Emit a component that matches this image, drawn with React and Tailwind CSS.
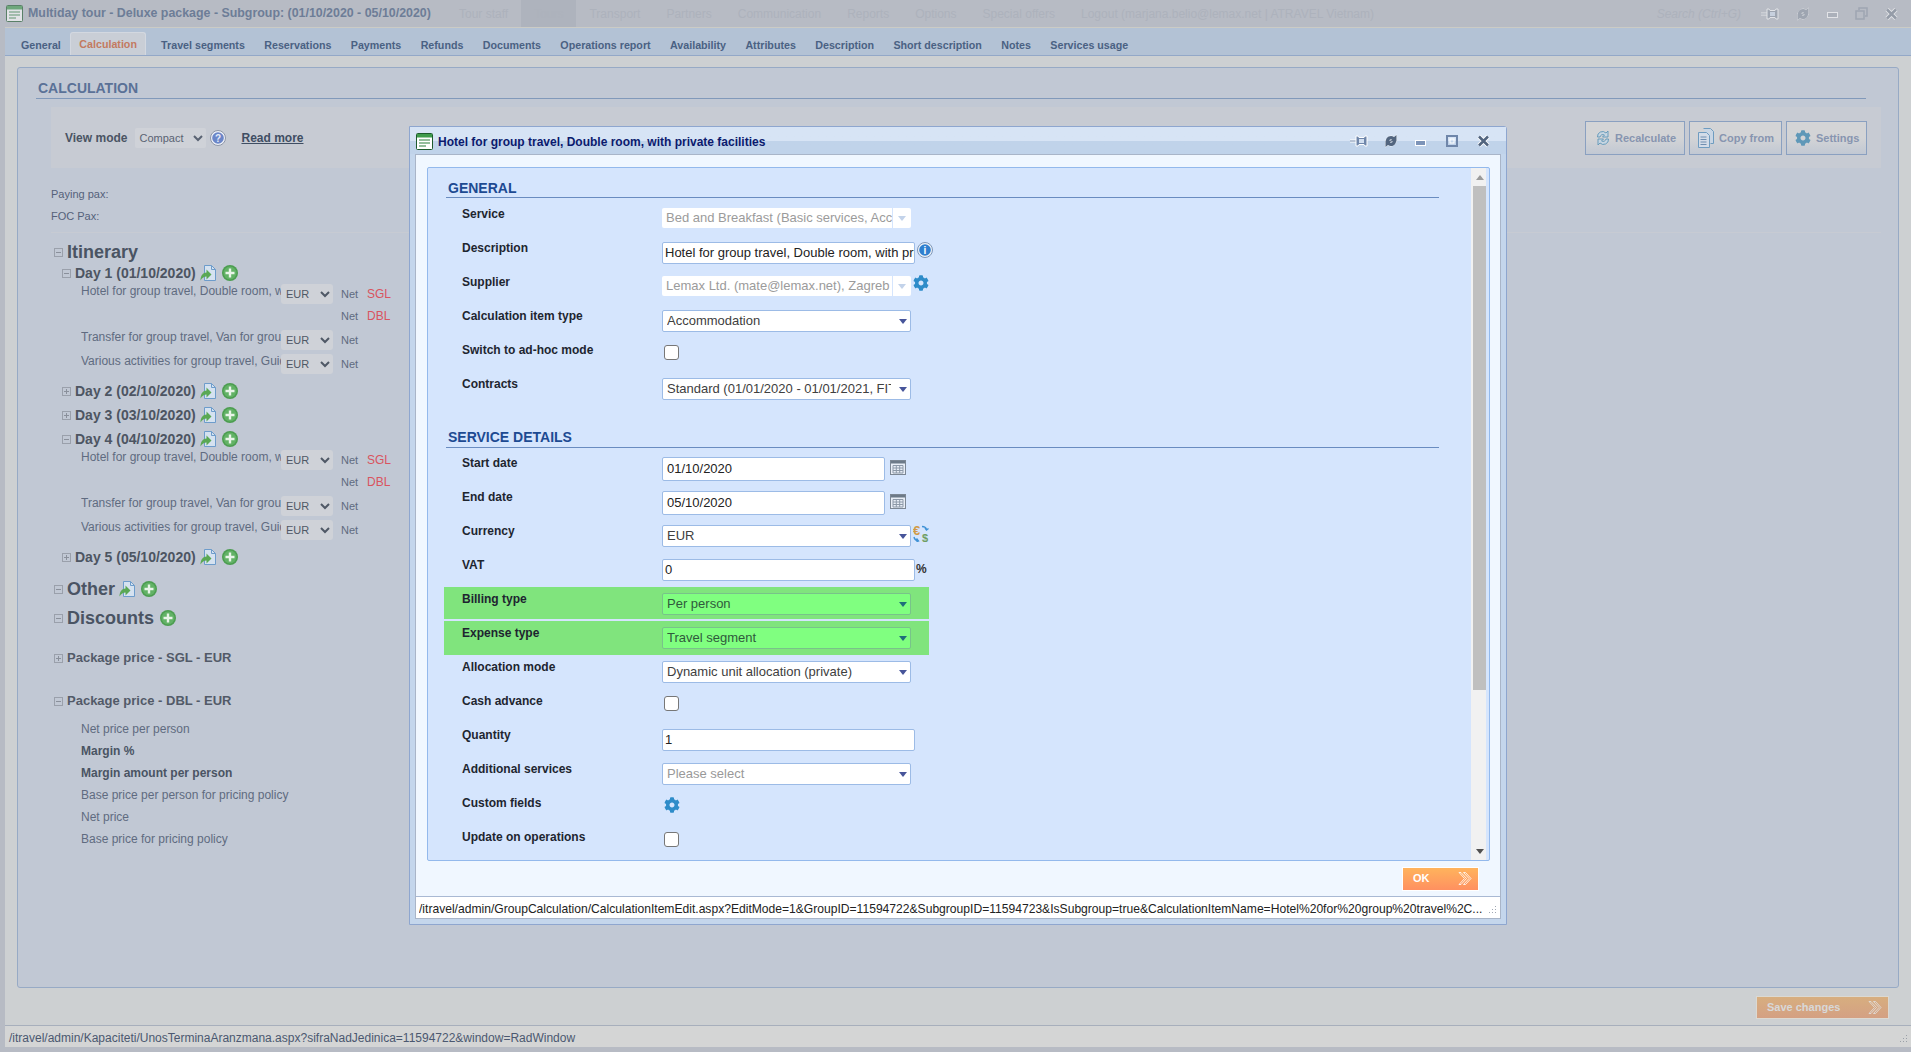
import React from 'react';
import { FaCog } from 'react-icons/fa';

const tabs = ['Reservations', 'Payments', 'Refunds', 'Documents', 'Operations report', 'Availability', 'Attributes', 'Description', 'Short description', 'Notes', 'Services usage'];
const ghostNav = ['Tour staff', 'Tours', 'Transport', 'Partners', 'Communication', 'Reports', 'Options', 'Special offers', 'Logout (marjana.belio@lemax.net | ATRAVEL Vietnam)'];

const WindowIcon = ({ dim }) => (
  <svg width="17" height="17" viewBox="0 0 17 17" className={`shrink-0 ${dim ? 'opacity-60' : ''}`}>
    <rect x="0.5" y="0.5" width="16" height="16" rx="1" fill="#fff" stroke="#1d5a2c" />
    <rect x="1" y="1" width="15" height="3.5" fill="#3f9b4c" />
    <path d="M3 7h11M3 10h11M3 13h7" stroke="#2b7f3d" strokeWidth="1.2" />
  </svg>
);

const DocArrow = () => (
  <svg width="16" height="16" viewBox="0 0 16 16" className="shrink-0">
    <path d="M4.500.5h7l4 4v11h-11z" fill="#d5e2f0" stroke="#6d9ccb" />
    <path d="M11.500.5v4h4" fill="none" stroke="#6d9ccb" />
    <path d="M.5 15.500c0-5 2.500-8 6-8V4.500l5 5-5 5v-3c-2.500 0-4 1-6 4z" fill="#5aa854" />
  </svg>
);

const PlusIcon = () => (
  <svg width="16" height="16" viewBox="0 0 16 16" className="shrink-0">
    <circle cx="8" cy="8" r="8" fill="#4c9d50" />
    <circle cx="8" cy="8" r="6.500" fill="#62b266" />
    <path d="M8 3.500v9M3.500 8h9" stroke="#e8f4e8" strokeWidth="2.400" />
  </svg>
);

const Toggle = ({ open }) => (
  <svg width="9" height="9" viewBox="0 0 9 9" className="shrink-0">
    <rect x="0.5" y="0.5" width="8" height="8" fill="none" stroke="#9aa0ab" />
    <path d={open ? 'M2 4.500h5' : 'M2 4.500h5M4.500 2v5'} stroke="#8a909b" />
  </svg>
);

const RoundIcon = ({ children, ring = '#8d95a6', fill = '#5e7cc4', text = '#e6ecf8' }) => (
  <svg width="16" height="16" viewBox="0 0 16 16" className="shrink-0">
    <circle cx="8" cy="8" r="7.500" fill="#eef1f7" stroke={ring} />
    <circle cx="8" cy="8" r="5.800" fill={fill} />
    <text x="8" y="11.500" textAnchor="middle" fontSize="10" fontWeight="700" fontFamily="Liberation Sans, sans-serif" fill={text}>{children}</text>
  </svg>
);

const Chevrons = ({ color = '#fff' }) => (
  <svg width="14" height="13" viewBox="0 0 14 13" className="shrink-0">
    <path d="M1 .5h2l5.500 6-5.500 6H1l5.500-6zM5.500.5h2l5.500 6-5.500 6h-2l5.500-6z" fill="none" stroke={color} strokeWidth="0.800" />
  </svg>
);

const Pin = ({ color = '#6f86aa' }) => (
  <svg width="18" height="12" viewBox="0 0 18 12" className="shrink-0">
    <path d="M0 6h6" stroke="#fff" strokeWidth="3" />
    <path d="M0 6h6" stroke={color} />
    <path d="M6 1h2l1 1.500h5L15 1h2v10h-2l-1-1.500H9L8 11H6z" fill={color} stroke="#fff" />
    <rect x="9" y="4" width="5" height="4" fill="#d2dff0" />
  </svg>
);

const Refresh = ({ color = '#52657f' }) => (
  <svg width="14" height="14" viewBox="0 0 14 14" className="shrink-0">
    <path d="M2 7.500a5 5 0 0 1 8-4.500l2.500-2v6.500H6L8 5.600A2.500 2.500 0 0 0 4.500 7.500zM12 6.500a5 5 0 0 1-8 4.500L1.500 13V6.500H8L6 8.400A2.500 2.500 0 0 0 9.500 6.500z" fill={color} stroke="#fff" strokeWidth="0.800" paintOrder="stroke" />
  </svg>
);

const Minimize = ({ color = '#7d94b8' }) => (
  <span className="mt-[3px] block h-[6px] w-[11px] shrink-0 border border-white" style={{ background: color }} />
);

const Maximize = ({ color = '#6f86aa' }) => (
  <svg width="12" height="12" viewBox="0 0 12 12" className="shrink-0">
    <rect x="1" y="1" width="10" height="10" fill="none" stroke={color} strokeWidth="2" />
    <rect x="4" y="4" width="4" height="4" fill="none" stroke="#fff" />
  </svg>
);

const Restore = ({ color = '#8f98a6' }) => (
  <svg width="13" height="13" viewBox="0 0 13 13" className="shrink-0">
    <path d="M4 3V1h8v8h-2" fill="none" stroke={color} strokeWidth="1.500" />
    <rect x="1" y="4" width="8" height="8" fill="none" stroke={color} strokeWidth="1.500" />
  </svg>
);

const Close = ({ color = '#52657f' }) => (
  <svg width="13" height="12" viewBox="0 0 13 12" className="shrink-0">
    <path d="M2 1.500l9 9M11 1.500l-9 9" stroke="#fff" strokeWidth="4.500" />
    <path d="M2 1.500l9 9M11 1.500l-9 9" stroke={color} strokeWidth="2.600" />
  </svg>
);

const Calendar = () => (
  <svg width="16" height="15" viewBox="0 0 16 15" className="shrink-0">
    <rect x="0.5" y="0.5" width="15" height="14" fill="#e9eef6" stroke="#7c8794" />
    <rect x="1" y="1" width="14" height="2.500" fill="#6d7a88" />
    <path d="M3 5.500h10M3 8h10M3 10.500h10M3 13h10M3 5.500V13M6.300 5.500V13M9.700 5.500V13M13 5.500V13" stroke="#8d99a8" fill="none" />
  </svg>
);

const Exchange = () => (
  <svg width="17" height="17" viewBox="0 0 17 17" className="shrink-0">
    <text x="0" y="10" fontSize="13" fontWeight="700" fontFamily="Liberation Sans, sans-serif" fill="#d19a45">€</text>
    <text x="9" y="16.500" fontSize="11" fontWeight="700" fontFamily="Liberation Sans, sans-serif" fill="#6f9e62">$</text>
    <path d="M9 1.500c2.500 0 4 1 4.500 3M12 3l1.500 2L15.500 3.500M1 12c.5 2.500 2 3.500 4.500 4M3.500 13.500L5.500 16 3.500 16.800" fill="none" stroke="#3f92d6" strokeWidth="1.400" />
  </svg>
);

const Triangle = ({ color = '#47559a' }) => (
  <svg width="8" height="5" viewBox="0 0 8 5" className="shrink-0">
    <path d="M0 0h8L4 5z" fill={color} />
  </svg>
);

const BlueCog = ({ size = 16 }) => <FaCog size={size} className="shrink-0 text-[#2e8cc9]" />;

const Dropdown = ({ value, muted, green, arrow }) => (
  <div className={`flex h-[22px] w-[249px] items-center justify-between rounded-[2px] border pl-[4px] pr-[3px] ${green ? 'border-[#78c38a] bg-[#80ff80] text-[#2f5a3c]' : 'border-[#9cbbe6] bg-white text-[#404040]'}`}>
    <span className={`w-[224px] overflow-hidden whitespace-nowrap ${muted ? 'text-[#999]' : ''}`}>{value}</span>
    <Triangle color={arrow} />
  </div>
);

const DisabledCombo = ({ value }) => (
  <div className="flex h-[20px] w-[249px] rounded-[2px] bg-white text-[#9b9b9b]">
    <span className="w-[231px] overflow-hidden whitespace-nowrap border-r border-[#d5e5fd] pl-[4px] leading-[20px]">{value}</span>
    <span className="flex flex-1 items-center justify-center"><Triangle color="#c3d3ea" /></span>
  </div>
);

const TextField = ({ value, w = 'w-[253px]', h = 'h-[22px]', pad = 'pl-[2px]' }) => (
  <div className={`${w} ${h} ${pad} flex items-center overflow-hidden whitespace-nowrap rounded-[2px] border border-[#9cbbe6] bg-white text-[#222]`}>{value}</div>
);

const Check = () => (
  <input type="checkbox" readOnly className="ml-[2px] mt-[1px] block h-[15px] w-[15px] appearance-none rounded-[3px] border-[1.500px] border-[#777] bg-white" />
);

const Row = ({ label, children, h = 'h-[34px]', className = '' }) => (
  <div className={`flex ${h} ${className}`}>
    <div className="w-[218px] shrink-0 pl-[18px] text-[12px] font-bold leading-[20px] text-[#1e2530]">{label}</div>
    <div className="flex items-start gap-[3px] pt-[4px] text-[13px]">{children}</div>
  </div>
);

const SectionHead = ({ children, className = '' }) => (
  <div className={`border-b border-[#6a8cc0] pl-[2px] text-[14px] font-bold leading-[19px] text-[#1d4a92] ${className}`}>{children}</div>
);

const CurrencySelect = () => (
  <select defaultValue="EUR" className="h-[20px] w-[52px] shrink-0 rounded-[3px] border-0 bg-[#cfd2d8] pl-[1px] text-[11px] text-[#4f5866] outline-none">
    <option>EUR</option>
  </select>
);

const ItemRow = ({ name, tag, className = '' }) => (
  <div className={`flex h-[22px] items-center pl-[27px] text-[11px] text-[#5f6b80] ${className}`}>
    <span className="h-[22px] w-[200px] shrink-0 overflow-hidden whitespace-nowrap text-[12px] leading-[16px]">{name}</span>
    {name ? <CurrencySelect /> : <span className="w-[52px] shrink-0" />}
    <span className="ml-[8px] w-[26px] shrink-0">Net</span>
    {tag && <span className="text-[12px] text-[#d9545f]">{tag}</span>}
  </div>
);

const DayRow = ({ label, open, className = '' }) => (
  <div className={`flex h-[20px] items-center pl-[8px] text-[14px] font-bold text-[#4d5562] ${className}`}>
    <Toggle open={open} />
    <span className="ml-[4px]">{label}</span>
    <span className="ml-[4px]"><DocArrow /></span>
    <span className="ml-[6px]"><PlusIcon /></span>
  </div>
);

const DayItems = () => (
  <>
    <ItemRow name="Hotel for group travel, Double room, with private facilities" tag="SGL" />
    <ItemRow name="" tag="DBL" />
    <ItemRow name="Transfer for group travel, Van for group travel" className="mt-[2px]" />
    <ItemRow name="Various activities for group travel, Guide" className="mt-[2px]" />
  </>
);

const GrayButton = ({ icon, label, w }) => (
  <div className={`flex h-[34px] ${w} items-center gap-[5px] border border-[#8aa0c0] bg-gradient-to-b from-[#d3d4d6] from-50% to-[#c1c8d3] pl-[8px] text-[11px] font-bold text-[#8795b0]`}>
    {icon}
    <span className="pt-[1px]">{label}</span>
  </div>
);

const RecalcIcon = () => (
  <svg width="14" height="18" viewBox="0 0 14 18" className="ml-[2px] shrink-0">
    <path d="M1.500 8a5 5 0 0 1 8.500-4l2-2v6H6.500l2-2a3 3 0 0 0-4.500 2zM12.500 10a5 5 0 0 1-8.500 4l-2 2v-6h5.500l-2 2a3 3 0 0 0 4.500-2z" fill="#c7d6e2" stroke="#5e96b8" strokeWidth="0.900" />
  </svg>
);

const CopyIcon = () => (
  <svg width="16" height="20" viewBox="0 0 16 20" className="shrink-0">
    <path d="M5.500.5h7l3 3v12h-3" fill="#c9d6e4" stroke="#6f9cc0" />
    <path d="M.5 4.500h8l3 3v12H.5z" fill="#d3dce8" stroke="#6f9cc0" />
    <path d="M2.500 9h6M2.500 11.500h6M2.500 14h6M2.500 16.500h6" stroke="#6f8eb0" />
  </svg>
);

export default function App() {
  return (
    <div className="relative flex h-[1052px] w-[1911px] flex-col overflow-hidden bg-[#b7bbc4] [font-family:'Liberation_Sans',Arial,sans-serif]">
      {/* window title, the nav behind it is almost gone under the overlay */}
      <div className="flex h-[27px] shrink-0 items-center pl-[6px]">
        <WindowIcon dim />
        <span className="ml-[5px] w-[418px] shrink-0 whitespace-nowrap text-[12.4px] font-bold text-[#6d7d97]">Multiday tour - Deluxe package - Subgroup: (01/10/2020 - 05/10/2020)</span>
        <div className="flex h-[27px] shrink-0 items-center text-[12px] text-[#adb2bc]">
          {ghostNav.map((item) => (
            <span key={item} className={`flex h-[27px] items-center whitespace-nowrap px-[13px] ${item === 'Tours' ? 'bg-[#aeb3bd]' : ''}`}>{item}</span>
          ))}
        </div>
        <span className="ml-auto shrink-0 whitespace-nowrap text-[12px] italic text-[#adb2bc]">Search (Ctrl+G)</span>
        <div className="ml-[20px] mr-[12px] flex w-[138px] shrink-0 items-center justify-between pr-[1px] opacity-60">
          <Pin color="#8f98a6" />
          <Refresh color="#8f98a6" />
          <Minimize color="#a4aab5" />
          <Restore />
          <Close color="#7f8896" />
        </div>
      </div>

      <div className="ml-[5px] flex flex-1 flex-col border-t border-[#cbcbc5] bg-[#cdd0d2]">
        <div className="flex h-[28px] shrink-0 items-end border-b border-[#93a8c8] bg-[#b3c2d5] pl-[7px] text-[10.7px] font-bold text-[#4a6183]">
          <span className="flex h-[21px] items-center px-[9px] pt-[1px]">General</span>
          <span className="flex h-[23px] items-center rounded-t-[3px] border border-b-0 border-[#d3d8e0] bg-[#c9ced6] px-[8.500px] pt-[1px] text-[#c37a5f]">Calculation</span>
          <span className="ml-[5px] flex h-[21px] items-center whitespace-nowrap px-[9.700px] pt-[1px]">Travel segments</span>
          {tabs.map((tab) => (
            <span key={tab} className="flex h-[21px] items-center whitespace-nowrap px-[9.700px] pt-[1px]">{tab}</span>
          ))}
        </div>

        <div className="mx-[12px] mt-[11px] h-[921px] shrink-0 rounded-[3px] border border-[#97aac5] bg-[#c1c8d4] pl-[18px] pr-[32px]">
          <div className="mt-[10px] border-b border-[#8199ba] pl-[2px] text-[14px] font-bold leading-[20px] text-[#5a7197]">CALCULATION</div>
          <div className="-mr-[15px] ml-[15px] mt-[8px] flex h-[61px] items-center bg-[#c7cbd3] pl-[14px] pr-[14px]">
            <span className="text-[12px] font-bold text-[#4a5463]">View mode</span>
            <select defaultValue="Compact" className="ml-[8px] h-[20px] w-[71px] rounded-[2px] border-0 bg-[#cfd2d8] text-[11px] text-[#5a6373] outline-none">
              <option>Compact</option>
            </select>
            <span className="ml-[4px]"><RoundIcon ring="#8d95a6" fill="#6b86c8">?</RoundIcon></span>
            <span className="ml-[15px] text-[12px] font-bold text-[#3f4e63] underline">Read more</span>
            <div className="ml-auto flex gap-[4px]">
              <GrayButton w="w-[100px]" icon={<RecalcIcon />} label="Recalculate" />
              <GrayButton w="w-[93px]" icon={<CopyIcon />} label="Copy from" />
              <GrayButton w="w-[81px]" icon={<FaCog size={16} className="shrink-0 text-[#5f98b8]" />} label="Settings" />
            </div>
          </div>

          <div className="ml-[15px] mt-[15px] text-[11px] leading-[22px] text-[#55617a]">
            <div>Paying pax:</div>
            <div>FOC Pax:</div>
          </div>
          <div className="-mr-[15px] ml-[15px] mt-[5px] h-px bg-[#c7cbd3]" />

          <div className="ml-[18px] w-[340px]">
            <div className="mt-[8px] flex h-[22px] items-center text-[18px] font-bold text-[#4a5463]">
              <Toggle open />
              <span className="ml-[4px]">Itinerary</span>
            </div>
            <DayRow label="Day 1 (01/10/2020)" open />
            <DayItems />
            <DayRow label="Day 2 (02/10/2020)" className="mt-[6px]" />
            <DayRow label="Day 3 (03/10/2020)" className="mt-[4px]" />
            <DayRow label="Day 4 (04/10/2020)" open className="mt-[4px]" />
            <DayItems />
            <DayRow label="Day 5 (05/10/2020)" className="mt-[6px]" />
            <div className="mt-[10px] flex h-[24px] items-center text-[18px] font-bold text-[#4a5463]">
              <Toggle open />
              <span className="ml-[4px]">Other</span>
              <span className="ml-[4px]"><DocArrow /></span>
              <span className="ml-[6px]"><PlusIcon /></span>
            </div>
            <div className="mt-[5px] flex h-[24px] items-center text-[18px] font-bold text-[#4a5463]">
              <Toggle open />
              <span className="ml-[4px]">Discounts</span>
              <span className="ml-[6px]"><PlusIcon /></span>
            </div>
            <div className="mt-[18px] flex h-[20px] items-center text-[13px] font-bold text-[#525a68]">
              <Toggle />
              <span className="ml-[4px]">Package price - SGL - EUR</span>
            </div>
            <div className="mt-[23px] flex h-[20px] items-center text-[13px] font-bold text-[#525a68]">
              <Toggle open />
              <span className="ml-[4px]">Package price - DBL - EUR</span>
            </div>
            <div className="mt-[7px] pl-[27px] text-[12px] leading-[22px] text-[#5f6b80]">
              <div>Net price per person</div>
              <div className="font-bold text-[#4a5463]">Margin %</div>
              <div className="font-bold text-[#4a5463]">Margin amount per person</div>
              <div>Base price per person for pricing policy</div>
              <div>Net price</div>
              <div>Base price for pricing policy</div>
            </div>
          </div>
        </div>

        <div className="flex h-[37px] shrink-0 items-start justify-end pr-[22px] pt-[8px]">
          <div className="flex h-[23px] w-[133px] items-center justify-between border border-[#dcd9d2] bg-gradient-to-b from-[#d7ae7f] to-[#d4a083] pl-[10px] pr-[6px] text-[11px] font-bold text-[#d8d8d8]">
            <span>Save changes</span>
            <Chevrons color="#e2e2e2" />
          </div>
        </div>

        <div className="flex h-[22px] shrink-0 items-center justify-between border-t border-[#a7afbc] bg-[#d4d5d5] pl-[4px] pr-[3px] pt-[3px] text-[12px] text-[#4b5870]">
          <span>/itravel/admin/Kapaciteti/UnosTerminaAranzmana.aspx?sifraNadJedinica=11594722&amp;window=RadWindow</span>
          <svg width="9" height="9" viewBox="0 0 9 9"><path d="M7 1h1v1H7zM4 4h1v1H4zM7 4h1v1H7zM1 7h1v1H1zM4 7h1v1H4zM7 7h1v1H7z" fill="#9aa0a8" /></svg>
        </div>
        <div className="h-[5px] shrink-0 bg-[#b7bbc4]" />
      </div>

      {/* modal window on top of the dimmed page */}
      <div className="absolute left-[409px] top-[126px] flex h-[799px] w-[1098px] flex-col rounded-tr-[3px] border border-[#8ea6cf] bg-[#c4d6ec] text-[12px]">
        <div className="flex h-[27px] shrink-0 items-center bg-gradient-to-b from-[#d7e4f5] from-50% to-[#c0d3ea] to-50% pl-[6px] pr-[16px] pt-[1px]">
          <WindowIcon />
          <span className="ml-[5px] pt-[1px] text-[12px] font-bold text-[#0b1a6e]">Hotel for group travel, Double room, with private facilities</span>
          <div className="ml-auto flex items-center">
            <Pin />
            <span className="ml-[16px] flex"><Refresh /></span>
            <span className="ml-[17px] flex"><Minimize /></span>
            <span className="ml-[20px] flex"><Maximize /></span>
            <span className="ml-[19px] flex"><Close /></span>
          </div>
        </div>

        <div className="mx-[5px] mb-[5px] flex flex-1 flex-col border border-[#a9b5c8] bg-[#f0f7ff]">
          <div className="ml-[11px] mt-[12px] flex h-[694px] w-[1063px] shrink-0 overflow-hidden rounded-[2px] border border-[#93b9ec] bg-[#d5e5fd] pr-[3px]">
            <div className="flex-1 pl-[18px] pr-[32px]">
              <SectionHead className="h-[30px] pt-[11px]">GENERAL</SectionHead>
              <div className="-ml-[2px] pt-[6px]">
                <Row label="Service"><DisabledCombo value="Bed and Breakfast (Basic services, Accommodation)" /></Row>
                <Row label="Description">
                  <TextField value="Hotel for group travel, Double room, with private facilities" />
                  <span className="-ml-[1px]"><RoundIcon ring="#7e97b8" fill="#2f7fcf" text="#fff">i</RoundIcon></span>
                </Row>
                <Row label="Supplier">
                  <DisabledCombo value="Lemax Ltd. (mate@lemax.net), Zagreb" />
                  <span className="-ml-[1px] -mt-[1px]"><BlueCog /></span>
                </Row>
                <Row label="Calculation item type"><Dropdown value="Accommodation" /></Row>
                <Row label="Switch to ad-hoc mode"><Check /></Row>
                <Row label="Contracts"><Dropdown value="Standard (01/01/2020 - 01/01/2021, FIT)" /></Row>
              </div>
              <SectionHead className="mt-[12px] h-[28px] pt-[8px]">SERVICE DETAILS</SectionHead>
              <div className="-ml-[2px] flex flex-col pt-[5px]">
                <Row label="Start date">
                  <TextField value="01/10/2020" w="w-[223px]" h="h-[24px]" pad="pl-[4px]" />
                  <span className="ml-[2px] pt-[3px]"><Calendar /></span>
                </Row>
                <Row label="End date">
                  <TextField value="05/10/2020" w="w-[223px]" h="h-[24px]" pad="pl-[4px]" />
                  <span className="ml-[2px] pt-[3px]"><Calendar /></span>
                </Row>
                <Row label="Currency">
                  <Dropdown value="EUR" />
                  <span className="-ml-[1px]"><Exchange /></span>
                </Row>
                <Row label="VAT">
                  <TextField value="0" />
                  <span className="-ml-[2px] pt-[1px] text-[12px] font-bold text-[#333]">%</span>
                </Row>
                <Row label="Billing type" h="h-[32px]" className="-mt-[2px] mb-[4px] w-[485px] bg-[#80e47d] pt-[2px]">
                  <Dropdown value="Per person" green arrow="#1f6f7a" />
                </Row>
                <Row label="Expense type" className="-mt-[2px] mb-[2px] w-[485px] bg-[#80e47d] pt-[2px]">
                  <Dropdown value="Travel segment" green arrow="#1f6f7a" />
                </Row>
                <Row label="Allocation mode"><Dropdown value="Dynamic unit allocation (private)" /></Row>
                <Row label="Cash advance"><Check /></Row>
                <Row label="Quantity"><TextField value="1" /></Row>
                <Row label="Additional services"><Dropdown value="Please select" muted /></Row>
                <Row label="Custom fields"><span className="ml-[2px]"><BlueCog /></span></Row>
                <Row label="Update on operations"><Check /></Row>
              </div>
            </div>
            <div className="flex w-[15px] shrink-0 flex-col items-center bg-[#f1f1f1] pl-[2px]">
              <span className="flex h-[18px] items-center"><svg width="8" height="5" viewBox="0 0 8 5"><path d="M4 0l4 5H0z" fill="#9b9b9b" /></svg></span>
              <div className="h-[504px] w-full bg-[#bfbfbf]" />
              <span className="mt-auto flex h-[18px] items-center"><svg width="8" height="5" viewBox="0 0 8 5"><path d="M0 0h8L4 5z" fill="#505050" /></svg></span>
            </div>
          </div>

          <div className="flex flex-1 items-center justify-end pr-[21px]">
            <div className="flex h-[24px] w-[77px] items-center justify-between border border-white bg-gradient-to-b from-[#ffb35c] to-[#ff9060] pl-[10px] pr-[6px] text-[11px] font-bold text-white">
              <span>OK</span>
              <Chevrons />
            </div>
          </div>

          <div className="flex h-[22px] shrink-0 items-center justify-between border-t border-[#a9b9d3] bg-white pl-[3px] pr-[3px] pt-[4px] text-[12.1px] text-[#222]">
            <span className="w-[1070px] overflow-hidden whitespace-nowrap">/itravel/admin/GroupCalculation/CalculationItemEdit.aspx?EditMode=1&amp;GroupID=11594722&amp;SubgroupID=11594723&amp;IsSubgroup=true&amp;CalculationItemName=Hotel%20for%20group%20travel%2C...</span>
            <svg width="9" height="9" viewBox="0 0 9 9"><path d="M7 1h1v1H7zM4 4h1v1H4zM7 4h1v1H7zM1 7h1v1H1zM4 7h1v1H4zM7 7h1v1H7z" fill="#a0a8b4" /></svg>
          </div>
        </div>
      </div>
    </div>
  );
}
